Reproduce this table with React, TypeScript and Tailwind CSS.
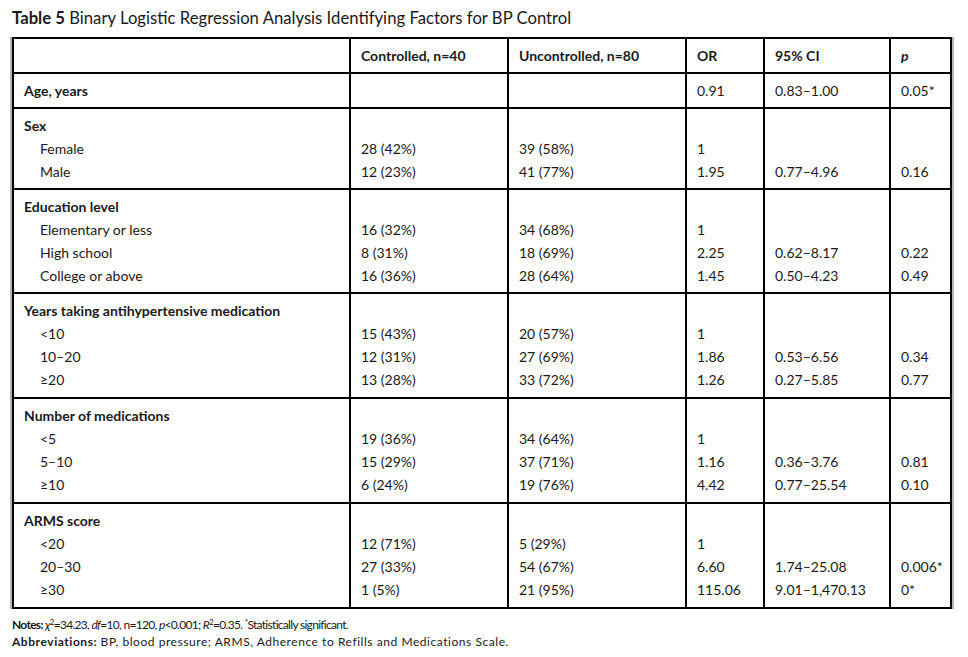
import * as React from "react"

type Group = {
  head: string
  items: string[]
  ctrl: string[]
  unctrl: string[]
  or: string[]
  ci: string[]
  p: string[]
}

const groups: Group[] = [
  {
    head: "Age, years",
    items: [],
    ctrl: [""],
    unctrl: [""],
    or: ["0.91"],
    ci: ["0.83–1.00"],
    p: ["0.05*"],
  },
  {
    head: "Sex",
    items: ["Female", "Male"],
    ctrl: ["", "28 (42%)", "12 (23%)"],
    unctrl: ["", "39 (58%)", "41 (77%)"],
    or: ["", "1", "1.95"],
    ci: ["", "", "0.77–4.96"],
    p: ["", "", "0.16"],
  },
  {
    head: "Education level",
    items: ["Elementary or less", "High school", "College or above"],
    ctrl: ["", "16 (32%)", "8 (31%)", "16 (36%)"],
    unctrl: ["", "34 (68%)", "18 (69%)", "28 (64%)"],
    or: ["", "1", "2.25", "1.45"],
    ci: ["", "", "0.62–8.17", "0.50–4.23"],
    p: ["", "", "0.22", "0.49"],
  },
  {
    head: "Years taking antihypertensive medication",
    items: ["<10", "10–20", "≥20"],
    ctrl: ["", "15 (43%)", "12 (31%)", "13 (28%)"],
    unctrl: ["", "20 (57%)", "27 (69%)", "33 (72%)"],
    or: ["", "1", "1.86", "1.26"],
    ci: ["", "", "0.53–6.56", "0.27–5.85"],
    p: ["", "", "0.34", "0.77"],
  },
  {
    head: "Number of medications",
    items: ["<5", "5–10", "≥10"],
    ctrl: ["", "19 (36%)", "15 (29%)", "6 (24%)"],
    unctrl: ["", "34 (64%)", "37 (71%)", "19 (76%)"],
    or: ["", "1", "1.16", "4.42"],
    ci: ["", "", "0.36–3.76", "0.77–25.54"],
    p: ["", "", "0.81", "0.10"],
  },
  {
    head: "ARMS score",
    items: ["<20", "20–30", "≥30"],
    ctrl: ["", "12 (71%)", "27 (33%)", "1 (5%)"],
    unctrl: ["", "5 (29%)", "54 (67%)", "21 (95%)"],
    or: ["", "1", "6.60", "115.06"],
    ci: ["", "", "1.74–25.08", "9.01–1,470.13"],
    p: ["", "", "0.006*", "0*"],
  },
]

function Lines({ lines }: { lines: string[] }) {
  return (
    <>
      {lines.map((l, i) => (
        <div key={i} className="h-[23px] leading-[23px] whitespace-nowrap">
          {l || "\u00a0"}
        </div>
      ))}
    </>
  )
}

const cell = "border-2 border-black align-top px-[10px] pt-[5px]"

export default function App() {
  return (
    <div className="h-[657px] w-[968px] bg-white font-['Lato',sans-serif] text-[#1a1a1a]">
      <div className="px-[12px] pt-[6px] text-[16.7px] leading-[24px]">
        <span className="font-bold">Table 5</span> Binary Logistic Regression
        Analysis Identifying Factors for BP Control
      </div>
      <div className="pl-[12px] pt-[7px]">
        <table className="w-[938px] table-fixed border-collapse text-[14px] shadow-[-2px_0_0_#b5b5b5,2px_0_0_#b5b5b5]">
          <colgroup>
            <col className="w-[337px]" />
            <col className="w-[158px]" />
            <col className="w-[178px]" />
            <col className="w-[78px]" />
            <col className="w-[126px]" />
            <col className="w-[61px]" />
          </colgroup>
          <thead>
            <tr className="text-left font-bold">
              <th className={`${cell} pb-[5px]`}>
                <Lines lines={[""]} />
              </th>
              <th className={`${cell} pb-[5px]`}>
                <Lines lines={["Controlled, n=40"]} />
              </th>
              <th className={`${cell} pb-[5px]`}>
                <Lines lines={["Uncontrolled, n=80"]} />
              </th>
              <th className={`${cell} pb-[5px]`}>
                <Lines lines={["OR"]} />
              </th>
              <th className={`${cell} pb-[5px]`}>
                <Lines lines={["95% CI"]} />
              </th>
              <th className={`${cell} pb-[5px]`}>
                <div className="h-[23px] leading-[23px] italic">p</div>
              </th>
            </tr>
          </thead>
          <tbody>
            {groups.map((g, gi) => {
              // later groups sit a pixel taller in the source
              const td = `${cell} ${gi >= 3 ? "pb-[6px]" : "pb-[5px]"}`
              return (
                <tr key={g.head}>
                  <td className={td}>
                    <div className="h-[23px] leading-[23px] font-bold whitespace-nowrap">
                      {g.head}
                    </div>
                    {g.items.map((it) => (
                      <div key={it} className="h-[23px] pl-[16px] leading-[23px]">
                        {it}
                      </div>
                    ))}
                  </td>
                  <td className={td}>
                    <Lines lines={g.ctrl} />
                  </td>
                  <td className={td}>
                    <Lines lines={g.unctrl} />
                  </td>
                  <td className={td}>
                    <Lines lines={g.or} />
                  </td>
                  <td className={td}>
                    <Lines lines={g.ci} />
                  </td>
                  <td className={td}>
                    <Lines lines={g.p} />
                  </td>
                </tr>
              )
            })}
          </tbody>
        </table>
      </div>
      <div className="px-[12px] pt-[7px] text-[12px] leading-[17px]">
        <div className="tracking-[-0.7px]">
          <span className="font-bold">Notes: </span>
          <span className="italic">χ</span>
          <sup className="text-[8px]">2</sup>=34.23, <span className="italic">df</span>=10,
          n=120, <span className="italic">p</span>&lt;0.001;{" "}
          <span className="italic">R</span>
          <sup className="text-[8px]">2</sup>=0.35.{" "}
          <sup className="text-[8px]">*</sup>Statistically significant.
        </div>
        <div className="tracking-[0.55px]">
          <span className="font-bold">Abbreviations: </span>BP, blood pressure;
          ARMS, Adherence to Refills and Medications Scale.
        </div>
      </div>
    </div>
  )
}
